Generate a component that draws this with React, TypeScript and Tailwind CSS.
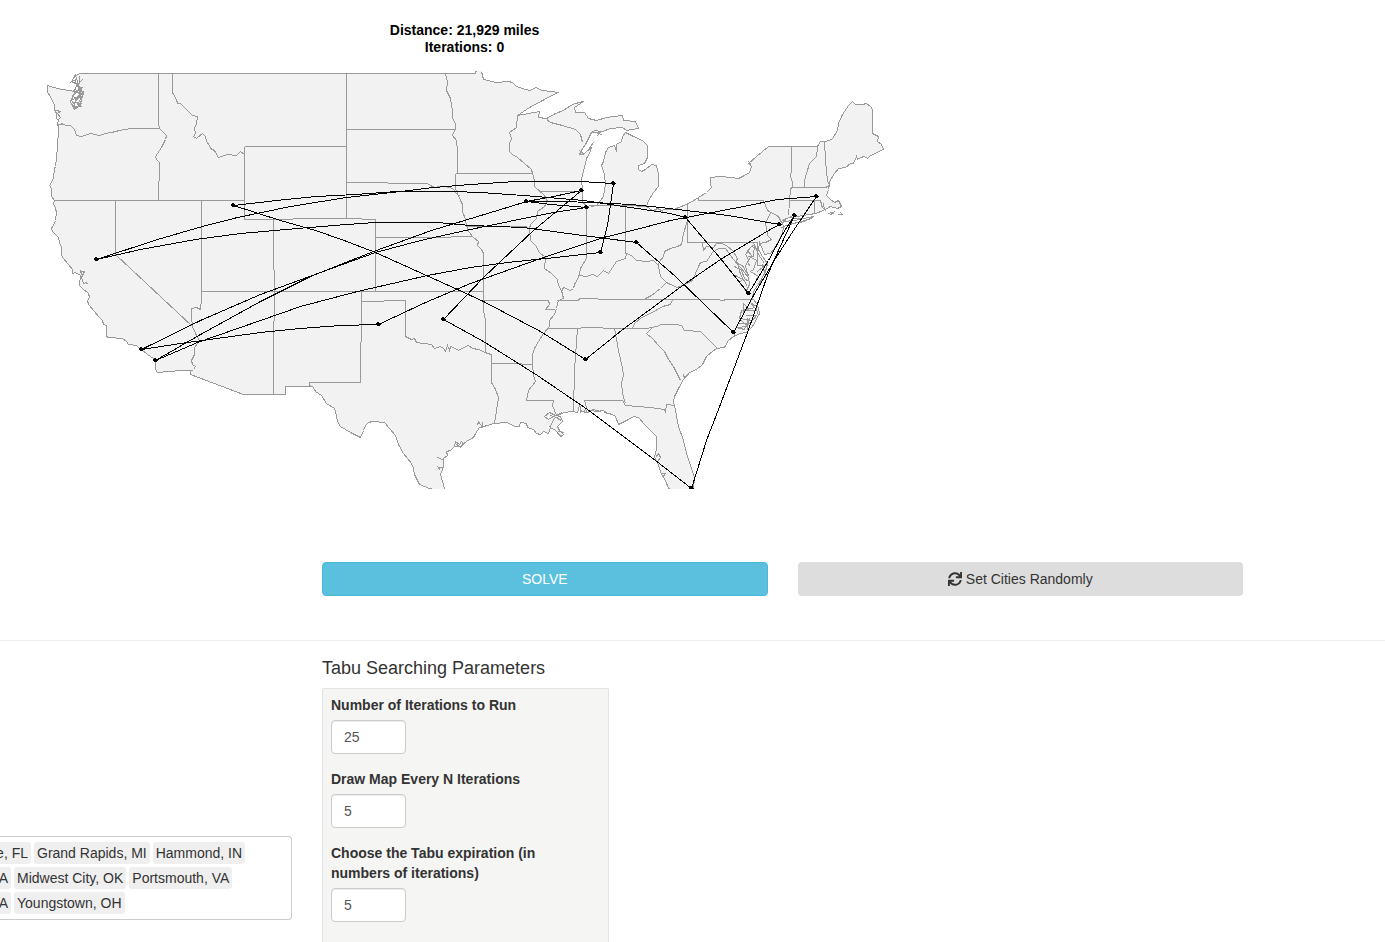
import React from "react";
import { FaSync } from "react-icons/fa";

const OUTLINE =
  "M47 85L47 92L50 96L52 101L54 104L54 109L56 113L56 118L58 120L57 123L58 127L58 137L57 138L57 146L56 157L55 166L54 168L53 177L51 182L49 185L51 188L51 196L54 200L53 203L55 208L56 212L55 220L54 223L51 228L52 231L58 237L59 242L61 247L61 255L63 258L72 269L72 273L75 272L80 275L79 285L82 288L88 293L89 297L87 300L88 304L94 311L98 316L102 320L103 324L106 325L106 336L108 337L122 338L126 341L128 344L136 345L138 347L141 349L147 354L153 358L155 362L155 369L157 372L180 370L190 370L190 374L243 394L285 394L285 386L312 386L314 389L315 391L321 395L326 403L334 408L336 415L337 421L340 426L350 432L360 437L363 430L365 425L368 422L372 421L384 422L389 428L395 435L398 444L403 453L411 463L413 468L414 474L419 484L429 488L444 488L442 481L440 474L442 469L443 465L443 458L447 455L446 451L450 450L454 446L460 446L466 441L473 437L475 433L479 427L487 425L493 423L506 422L515 426L519 426L520 422L526 423L527 427L533 429L536 433L540 434L543 431L548 433L550 427L555 430L560 436L563 434L559 430L557 426L562 421L560 416L556 415L564 412L572 411L577 412L579 405L581 411L587 412L591 410L596 411L603 410L607 413L610 413L615 416L618 424L628 419L633 416L638 417L644 424L650 430L656 436L656 448L654 457L657 462L661 474L665 480L668 488L693 488L694 477L690 465L686 453L683 440L678 426L674 405L673 401L674 396L678 388L683 379L689 372L696 369L702 364L706 356L712 351L716 348L724 347L728 340L733 336L740 333L746 332L752 326L759 313L757 304L752 298L753 291L759 282L765 271L767 263L762 256L758 249L759 242L762 249L764 254L770 253L776 245L782 233L783 226L781 221L785 218L803 215L815 213L823 210L830 206L837 208L841 206L838 200L834 202L830 199L826 195L828 189L829 185L829 181L834 173L838 168L845 167L850 163L853 163L856 156L857 159L860 157L864 156L867 158L870 155L875 153L880 150L883 149L881 144L877 141L878 136L872 133L872 109L870 106L866 103L862 104L855 104L852 101L848 105L842 114L838 123L837 130L832 138L829 140L824 141L820 141L817 146L768 146L756 156L748 163L751 166L749 172L744 175L738 178L730 177L720 176L710 177L710 183L711 187L706 192L698 197L690 202L681 206L673 209L664 209L658 211L652 210L646 206L648 200L653 192L658 186L658 174L656 165L651 164L645 169L641 171L638 169L638 165L644 163L647 157L647 145L643 141L638 138L633 136L625 132L622 136L621 141L616 144L616 151L614 145L608 147L605 152L603 161L601 165L604 174L605 184L603 196L596 205L592 205L586 206L582 201L582 190L581 178L584 167L586 158L589 153L591 147L586 151L583 154L579 154L582 148L585 144L588 138L591 132L597 132L602 131L610 128L622 127L626 130L632 129L638 128L635 121L623 120L622 115L606 117L596 120L588 118L584 112L575 112L574 107L583 101L575 103L570 105L563 110L555 113L546 118L538 117L539 111L517 115L529 107L557 92L551 91L541 90L536 87L529 90L522 88L516 86L512 82L508 81L496 82L483 79L481 71L475 71L475 73L80 73L75 75L77 81L79 87L80 93L81 99L79 105L73 108L70 101L74 93L75 91L62 89L53 87Z";

const BORDERS = [
  "M59 124L70 125L74 129L76 135L81 136L90 133L99 135L105 133L111 132L119 130L130 128L159 128",
  "M158 73V122L159 128L162 131L166 135L165 139L161 147L155 156L156 159L159 162L158 200",
  "M54 200H244", "M115 200V254L192 326",
  "M172 73V92L176 99L177 103L180 103L187 110L192 115L197 116L196 124L194 127L195 133L193 136L196 138L202 133L205 136L206 141L209 145L210 148L214 150L218 157L227 154L236 155L240 151L244 154",
  "M244 146H346M244 146V219H292L293 218H361L362 219H375V291", "M346 73V218",
  "M346 129H455", "M346 182H387L388 183H427L430 185L434 187L440 186L445 186L452 188L457 194L460 196",
  "M445 73L447 81L446 90L450 98L452 110L452 118L455 123L455 128L452 135L456 140L457 151V173", "M455 173H532",
  "M455 173V188L457 193L460 200L462 204L462 211L465 219L466 225L468 231L473 237L478 241L477 245L481 249L483 253V301",
  "M375 237H450L451 236H471", "M201 291H483", "M466 226H526L529 229",
  "M201 200V298L200 309L196 307L191 308V316L192 326L195 333L199 340L194 347L194 354L191 360L192 364L195 366L193 369L190 371",
  "M273 219V269L274 270V320L273 321V394", "M361 291V341L360 342V382H309V385L312 386",
  "M361 301H383L384 300H405V336L411 339L414 338L416 342L423 343L431 344L434 348L440 346L443 348L445 351L447 345L449 350L450 346L453 347L458 350L463 347L468 345L472 348L478 349L485 352L487 353L491 354V382L495 389L498 397L496 410L494 423",
  "M483 301V310L485 320V352", "M483 300H548L549 304L545 309H554", "M491 363H510L532 364",
  "M517 115L516 127L509 132L511 138L509 143V151L512 154L517 157L524 163L531 169L532 173L534 180L534 186L544 195L547 201L544 206L537 211L536 218L530 224L529 228L530 240L535 245L539 252L545 257L544 268L551 273L557 279L558 285L561 290L563 298L558 300L556 308L554 314L549 320L549 326L543 333L538 341L534 348L532 354L532 364L533 375L535 381L528 390L526 400H553L552 405L556 415",
  "M540 191H581", "M546 118L550 122L562 125L575 129L580 134L582 142",
  "M586 206V258L580 268L578 277L574 284L573 288L570 290L563 287L561 291",
  "M578 275L586 276L592 274L597 276L603 270L608 273L612 267L616 261L625 258L626 253L631 255L636 260L646 261L653 260L658 265L659 261L663 256L664 251L670 248L677 246L681 244L683 233L687 220",
  "M625 206V253", "M591 206L596 205H626L646 206", "M687 202V242H757V265H765", "M698 196V200H763L767 210L778 216L781 222",
  "M770 213L765 222L767 235L771 239L765 242L759 243", "M791 146V170L790 176L792 182V187L790 188L788 215",
  "M792 187H825L829 185", "M817 147L816 156L809 163L806 173L804 180L804 187", "M824 141L825 160L827 180L829 185",
  "M789 200H820L822 208", "M814 200V213", "M556 300H578L579 298L615 299H717L722 300L726 299H752",
  "M547 328H578L583 327L600 327L605 328H646L656 326L661 324H675L681 325L684 330L700 331L717 348",
  "M632 328L634 323L640 318L645 315L652 312L662 306L670 304L672 299", "M645 298L651 295L660 288L666 282L660 276L658 266",
  "M666 282L670 284L677 287L686 283L692 280L698 266L700 262L706 261L712 252L718 248L725 248L733 259L740 267L748 277L749 284L746 290",
  "M702 243L703 250L706 246L713 247L716 243L722 243L727 246L732 250L737 258L735 262L742 265L746 272L749 276",
  "M577 328L574 370L573 411", "M614 328L618 350L622 368L623 375L621 382L622 393L625 403",
  "M583 412L586 407L584 400H622M622 400L625 405L650 407L664 409L665 412L666 404L674 405",
  "M651 328L646 333L652 338L658 345L664 351L668 359L673 366L677 374L680 380M683 374L684 378L688 374",
  "M733 332L735 336M745 315H756L752 320L739 318L741 310L748 308L743 303V312M740 319L747 326L736 327L744 329L749 318M747 309L754 307L750 302L756 306L757 314M742 310H755M747 317V329M738 323H750M749 328L748 320",
  "M748 276L745 266L748 259L745 254L750 247L754 244L753 256L749 256L756 260L753 269L750 271L758 276L755 280M762 264L765 276L756 286M753 242L758 254L764 263M757 271L763 266M735 275L742 279L739 282L746 291M747 250L751 255L747 262L750 266M751 246L757 248",
  "M734 266L741 270L744 278L748 281M737 262L740 274L747 286",
  "M781 222L787 221L794 218L803 218L813 216L804 221L796 222L786 225L781 227M793 215L786 218L782 223M803 220L812 218M785 221L800 219M790 223L802 222",
  "M820 200L822 207L826 211M823 203L824 209M828 213L835 211M830 214L834 212M837 214L842 214L840 212",
  "M75 74L73 78L71 81L77 84L82 79M73 91L77 84L80 94L76 99L72 95L80 88L82 93L73 103L71 100L83 92L80 104L75 101L81 106L73 107L76 97M71 104L77 107L74 109M79 75V83M70 82L75 79L75 83M76 86L82 87L79 91H83L82 98M75 89L81 96L77 105M72 102L82 103M56 110L60 111L57 113L60 117L57 120M58 124L63 123",
  "M80 270L82 275L80 271L84 271L81 277L83 283L86 282L87 284",
  "M544 416L549 412L555 415L548 419ZM556 415L562 412M554 418L549 427M550 415L559 418M557 418L561 420M558 431L564 432M559 434L562 437",
  "M454 446L455 441L459 444L461 441L464 445M477 425L478 421L482 427L482 421M437 457L444 460M437 467L443 467M437 466L440 470M455 443L460 447L466 441",
  "M655 457L658 453L660 457L657 461M661 473L665 473L662 477M580 412V405M587 412L584 407M592 409L601 411M604 412L612 414",
  "M591 132L594 130L601 131L596 136M597 133L602 134M546 118L549 122M584 154L579 150M588 149L593 142",
  "M653 210L657 208L663 211M751 165L748 161",
];

const ROUTES = [
  "M96 259L157 239L202 226L237 217L290 206L346 197L400 191L433 187L470 184L515 181H580L613 183",
  "M96 259L140 249L195 239L240 233L297 228L346 224L375 222H437L470 225L523 227L575 234L636 242",
  "M233 205L276 200L316 196L355 194L396 191H453L480 192L523 195L583 200L630 207L670 213L685 217",
  "M526 201H560L593 202L630 204L660 207L728 215L779 224",
  "M233 205L280 220L315 230L341 239L375 252L457 289L483 301L540 331L585 359",
  "M141 349L200 320L260 294L320 272L375 252L420 240L465 230L523 218L553 212L586 207",
  "M155 360L200 334L260 301L310 276L373 251L431 230L510 206L526 201L553 196L581 190",
  "M526 201L550 204L586 207",
  "M155 360L197 342L260 320L300 306L357 291L427 275L470 267L507 262L555 257L600 252",
  "M141 349L180 343L260 332L300 328L340 325L378 324",
  "M378 324L425 302L470 283L540 258L603 237L632 230L670 220L743 206L777 199L816 196",
  "M443 319L483 277L533 230L581 190", "M443 319L483 341L537 375L587 409L655 460L691 488",
  "M585 359L621 330L670 294L685 283L720 259L768 230L779 224",
  "M636 242L675 276L733 332", "M685 217L720 258L748 293", "M613 183L607 225L600 252",
  "M748 293L768 260L783 232L794 215", "M733 332L753 295L775 258L793 230L816 196",
  "M794 215L772 263L767 275L747 332L718 409L706 440L691 488",
];

const CITIES = [
  [96, 259], [233, 205], [141, 349], [155, 360], [378, 324], [443, 319], [526, 201],
  [581, 190], [586, 207], [613, 183], [600, 252], [636, 242], [585, 359], [685, 217],
  [748, 293], [733, 332], [779, 224], [794, 215], [816, 196], [691, 488],
];

function RouteMap() {
  return (
    <svg className="block h-[444px] w-[929px]" viewBox="0 56 929 444" role="img" aria-label="Route map" shapeRendering="crispEdges">
      <defs>
        <clipPath id="plot"><rect x="0" y="71" width="929" height="418" /></clipPath>
      </defs>
      <g clipPath="url(#plot)">
        <g transform="translate(.5 .5)" fill="none">
          <path d={OUTLINE} fill="#f2f2f2" stroke="#999" />
          <path d="M476 71H481M431 488H443M669 488H692" stroke="#f2f2f2" />
          <path d="M751 272L757 277L752 290L749 286Z" fill="#fff" />
          <path d={BORDERS.join("")} stroke="#999" />
          <path d={ROUTES.join("")} stroke="#000" />
        </g>
        {CITIES.map(([x, y]) => (
          <path key={`${x}-${y}`} d={`M${x - 1} ${y - 2}h2v1h1v1h1v1h-1v1h-3v-1h-1v-2h1z`} fill="#000" />
        ))}
      </g>
    </svg>
  );
}

const SELECTED = [
  { cut: "e, FL", cutWidth: "w-[31px]", rest: ["Grand Rapids, MI", "Hammond, IN"] },
  { cut: "A", cutWidth: "w-[11px]", rest: ["Midwest City, OK", "Portsmouth, VA"] },
  { cut: "A", cutWidth: "w-[11px]", rest: ["Youngstown, OH"] },
];

function CityPicker() {
  return (
    <div className="flex flex-col gap-[3px] rounded-r border border-l-0 border-[#ccc] bg-white py-[5px]">
      {SELECTED.map((row) => (
        <div key={row.rest[0]} className="flex gap-[3px]">
          <span className={`flex h-[22px] items-center justify-end overflow-hidden rounded-r-[3px] bg-[#efefef] pr-[3px] whitespace-nowrap ${row.cutWidth}`}>
            {row.cut}
          </span>
          {row.rest.map((city) => (
            <span key={city} className="flex h-[22px] items-center rounded-[3px] bg-[#efefef] px-[3px] whitespace-nowrap">
              {city}
            </span>
          ))}
        </div>
      ))}
    </div>
  );
}

function NumberField({ id, label, value }: { id: string; label: string; value: number }) {
  return (
    <div className="mb-[15px]">
      <label htmlFor={id} className="mb-[5px] block font-bold">{label}</label>
      <input
        id={id}
        type="number"
        defaultValue={value}
        className="block h-[34px] w-[75px] rounded border border-[#ccc] bg-white px-3 text-[#555] shadow-[inset_0_1px_1px_rgba(0,0,0,0.075)]"
      />
    </div>
  );
}

export default function App() {
  return (
    <div className="flex min-h-screen flex-col overflow-x-hidden bg-white font-['Liberation_Sans',Arial,sans-serif] text-sm/5 text-[#333]">
      <section className="h-[562px] pt-[22px]">
        <h2 className="w-[929px] text-center text-sm/[17px] font-bold text-black">
          Distance: 21,929 miles
          <br />
          Iterations: 0
        </h2>
        <RouteMap />
      </section>
      <div className="mr-[142px] ml-[322px] grid grid-cols-2 gap-[30px]">
        <button type="button" className="h-[34px] rounded border border-[#46b8da] bg-[#5bc0de] text-white">SOLVE</button>
        <button type="button" className="flex h-[34px] items-center justify-center gap-1 rounded bg-[#ddd]">
          <FaSync aria-hidden="true" className="size-[14px]" />
          Set Cities Randomly
        </button>
      </div>
      <hr className="mt-11 border-[#eee]" />
      <div className="flex flex-1 gap-[30px]">
        <div className="w-[292px] pt-[195px]">
          <CityPicker />
        </div>
        <div className="flex w-[287px] flex-col">
          <h4 className="mt-[17px] mb-[10px] text-lg/5 font-normal">Tabu Searching Parameters</h4>
          <form className="flex-1 rounded-t-[2px] border border-b-0 border-[#e3e3e3] bg-[#f5f5f3] pt-[6px] pr-10 pl-2">
            <NumberField id="iterations" label="Number of Iterations to Run" value={25} />
            <NumberField id="draw-every" label="Draw Map Every N Iterations" value={5} />
            <NumberField id="expiration" label="Choose the Tabu expiration (in numbers of iterations)" value={5} />
          </form>
        </div>
      </div>
    </div>
  );
}
